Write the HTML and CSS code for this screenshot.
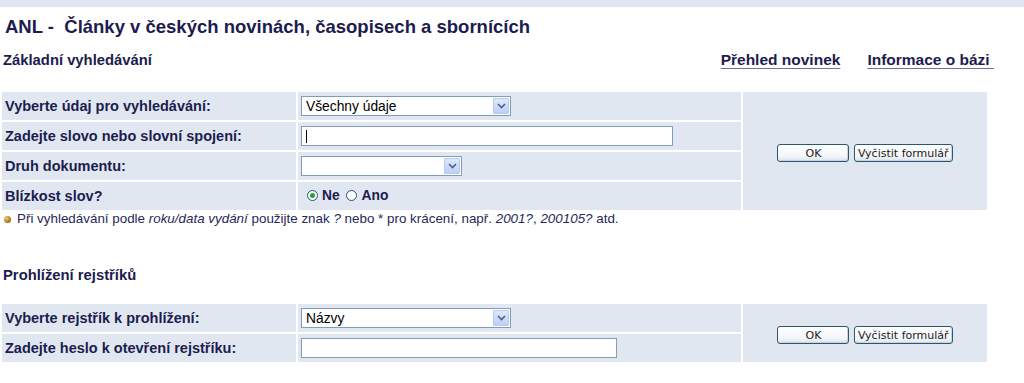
FILE: index.html
```html
<!DOCTYPE html>
<html lang="cs">
<head>
    <meta charset="UTF-8">
    <title>ANL - Články v českých novinách, časopisech a sbornících</title>
    <link rel="stylesheet" href="styles.css">
</head>
<body>
    <div class="topbar"></div>

    <h1 class="title">ANL -&nbsp; Články v českých novinách, časopisech a sbornících</h1>

    <div class="subhead">
        <h2>Základní vyhledávání</h2>
        <div class="links">
            <a href="#">Přehled novinek</a>
            <a href="#">Informace o bázi&nbsp;</a>
        </div>
    </div>

    <form class="search">
        <table class="form-table">
            <colgroup>
                <col class="c-label">
                <col class="c-field">
                <col class="c-btns">
            </colgroup>
            <tr>
                <th>Vyberte údaj pro vyhledávání:</th>
                <td>
                    <span class="select-wrap w210">
                        <select><option>Všechny údaje</option></select>
                        <span class="arrow"><svg width="9" height="6" viewBox="0 0 9 6"><path d="M1 1 L4.5 4.5 L8 1" fill="none" stroke="#4d6185" stroke-width="1.6"/></svg></span>
                    </span>
                </td>
                <td rowspan="4" class="btns">
                    <button type="button" class="btn ok">OK</button>
                    <button type="reset" class="btn">Vyčistit formulář</button>
                </td>
            </tr>
            <tr>
                <th>Zadejte slovo nebo slovní spojení:</th>
                <td><input type="text" class="text w372 caret"></td>
            </tr>
            <tr>
                <th>Druh dokumentu:</th>
                <td>
                    <span class="select-wrap w161">
                        <select><option></option></select>
                        <span class="arrow"><svg width="9" height="6" viewBox="0 0 9 6"><path d="M1 1 L4.5 4.5 L8 1" fill="none" stroke="#4d6185" stroke-width="1.6"/></svg></span>
                    </span>
                </td>
            </tr>
            <tr>
                <th>Blízkost slov?</th>
                <td class="radios">
                    <label><input type="radio" name="blizkost" checked> Ne</label>
                    <label><input type="radio" name="blizkost"> Ano</label>
                </td>
            </tr>
        </table>
    </form>

    <p class="note"><span class="bullet"></span>Při vyhledávání podle <em>roku/data vydání</em> použijte znak <em>?</em> nebo * pro krácení, např. <em>2001?</em>, <em>200105?</em> atd.</p>

    <h2 class="section">Prohlížení rejstříků</h2>

    <form class="browse">
        <table class="form-table">
            <colgroup>
                <col class="c-label">
                <col class="c-field">
                <col class="c-btns">
            </colgroup>
            <tr>
                <th>Vyberte rejstřík k prohlížení:</th>
                <td>
                    <span class="select-wrap w210">
                        <select><option>Názvy</option></select>
                        <span class="arrow"><svg width="9" height="6" viewBox="0 0 9 6"><path d="M1 1 L4.5 4.5 L8 1" fill="none" stroke="#4d6185" stroke-width="1.6"/></svg></span>
                    </span>
                </td>
                <td rowspan="2" class="btns">
                    <button type="button" class="btn ok">OK</button>
                    <button type="reset" class="btn">Vyčistit formulář</button>
                </td>
            </tr>
            <tr>
                <th>Zadejte heslo k otevření rejstříku:</th>
                <td><input type="text" class="text w316"></td>
            </tr>
        </table>
    </form>
</body>
</html>
```

FILE: styles.css
```css
* {
    margin: 0;
    padding: 0;
    box-sizing: border-box;
}

body {
    font-family: 'Liberation Sans', Arial, sans-serif;
    color: #1c1c4e;
    background: white;
    width: 1024px;
}

.topbar {
    height: 7px;
    background: #e1e7f1;
}

.title {
    font-size: 18.5px;
    line-height: 22px;
    font-weight: bold;
    margin: 9px 0 0 5px;
    white-space: nowrap;
}

.subhead {
    display: flex;
    justify-content: space-between;
    align-items: center;
    height: 20px;
    margin-top: 12px;
}

.subhead h2,
.section {
    font-size: 14.8px;
    font-weight: bold;
    padding-left: 3px;
}

.links {
    display: flex;
    gap: 27px;
    padding-right: 30px;
}

.links a {
    color: #1c1c4e;
    font-size: 15.5px;
    font-weight: bold;
    text-decoration: underline;
    text-decoration-color: #6b7396;
    text-underline-offset: 3px;
}

.search {
    margin-top: 20px;
}

.form-table {
    table-layout: fixed;
    border-collapse: separate;
    border-spacing: 2px;
    width: 989px;
}

.c-label { width: 294px; }
.c-field { width: 443px; }
.c-btns { width: 244px; }

.form-table th,
.form-table td {
    background: #e1e7f1;
    height: 28px;
    vertical-align: middle;
}

.form-table th {
    text-align: left;
    font-size: 14.5px;
    font-weight: bold;
    padding-left: 3px;
    white-space: nowrap;
}

.form-table td {
    padding-left: 3px;
}

.select-wrap {
    position: relative;
    display: inline-block;
    height: 20px;
    vertical-align: middle;
}

.select-wrap select {
    appearance: none;
    width: 100%;
    height: 20px;
    border: 1px solid #7f9db9;
    background: white;
    font-family: 'Liberation Sans', Arial, sans-serif;
    font-size: 13.8px;
    color: #000;
    padding-left: 4px;
    outline: none;
}

.select-wrap .arrow {
    position: absolute;
    top: 2px;
    right: 2px;
    width: 16px;
    height: 16px;
    background: linear-gradient(#dde8fd, #bccff7);
    border: 1px solid #b8cbee;
    border-radius: 1px;
    display: flex;
    align-items: center;
    justify-content: center;
    pointer-events: none;
}

.w210 { width: 210px; }
.w161 { width: 161px; }

.text {
    height: 20px;
    border: 1px solid #7f9db9;
    background: white;
    font-size: 13px;
    vertical-align: middle;
    outline: none;
}

.w372 { width: 372px; }
.w316 { width: 316px; }

.caret {
    background: linear-gradient(#000, #000) 4px 3px / 1px 13px no-repeat, white;
}

.radios {
    font-size: 13.8px;
    font-weight: bold;
}

.radios label {
    display: inline-flex;
    align-items: center;
    gap: 4px;
    margin-right: 3px;
}

.radios label:first-child {
    margin-left: 6px;
}

.radios input {
    appearance: none;
    width: 11px;
    height: 11px;
    border: 1px solid #1d5281;
    border-radius: 50%;
    background: white;
    position: relative;
}

.radios input:checked::after {
    content: "";
    position: absolute;
    left: 2px;
    top: 2px;
    width: 5px;
    height: 5px;
    border-radius: 50%;
    background: #2aa12a;
}

.form-table td.btns {
    text-align: center;
    padding-left: 0;
    padding-top: 4px;
}

.btn {
    font-family: 'DejaVu Sans', Verdana, sans-serif;
    font-size: 11px;
    color: #1a1a1a;
    height: 18px;
    padding: 0 3px;
    border: 1px solid #2a5870;
    border-radius: 3px;
    background: linear-gradient(#ffffff, #f3f6f9 70%, #dde4ea);
    box-shadow: inset -1px -1px 0 #c8d2db;
    vertical-align: middle;
}

.btn.ok {
    width: 72px;
}

.note {
    font-size: 13.4px;
    line-height: 16px;
    margin-top: -1px;
    padding-left: 4px;
    color: #28285a;
    display: flex;
    align-items: center;
    white-space: pre;
}

.note em {
    font-style: italic;
}

.bullet {
    display: inline-block;
    width: 7px;
    height: 7px;
    border-radius: 50%;
    background: radial-gradient(circle at 35% 35%, #f1d27a, #b07a18 60%, #6b4608);
    margin-right: 6px;
}

.section {
    margin-top: 38px;
    height: 20px;
    line-height: 20px;
}

.browse {
    margin-top: 17px;
}
```
